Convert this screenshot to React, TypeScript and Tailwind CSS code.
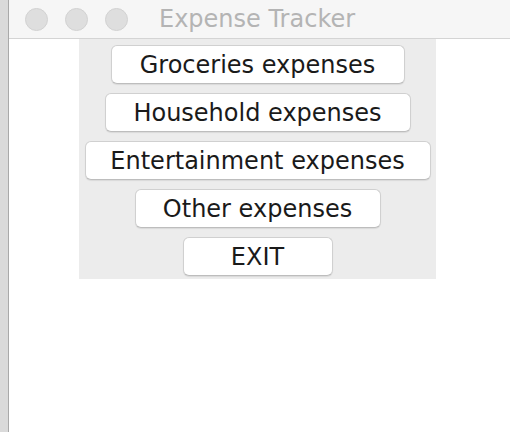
const buttons = [
  { label: 'Groceries expenses', w: 'w-[294px]' },
  { label: 'Household expenses', w: 'w-[306px]' },
  { label: 'Entertainment expenses', w: 'w-[346px]' },
  { label: 'Other expenses', w: 'w-[246px]' },
  { label: 'EXIT', w: 'w-[150px]' },
]

export default function App() {
  return (
    <div className="flex h-[432px] w-[510px] overflow-hidden bg-white font-['DejaVu_Sans',Arial,sans-serif]">
      {/* window behind */}
      <div className="w-[9px] shrink-0 border-r border-[#a9a9a9] bg-[#dadada]" />

      <div className="flex flex-1 flex-col">
        {/* title bar */}
        <div className="relative flex h-[39px] shrink-0 items-center border-b border-[#d4d4d4] bg-[#f6f6f6]">
          <div className="flex gap-[17px] pl-[16px]">
            <span className="h-[23px] w-[23px] rounded-full border border-[#d2d2d2] bg-[#dedede]" />
            <span className="h-[23px] w-[23px] rounded-full border border-[#d2d2d2] bg-[#dedede]" />
            <span className="h-[23px] w-[23px] rounded-full border border-[#d2d2d2] bg-[#dedede]" />
          </div>
          <span className="ml-[31px] text-[24px] leading-none text-[#b4b4b4]">Expense Tracker</span>
        </div>

        {/* content */}
        <div className="flex-1 bg-white">
          <div className="ml-[70px] flex h-[240px] w-[357px] flex-col items-center gap-[9px] bg-[#ececec] pt-[6px]">
            {buttons.map((b) => (
              <button
                key={b.label}
                className={`${b.w} h-[39px] shrink-0 rounded-[6px] border border-[#d0d0d0] border-b-[#bdbdbd] bg-white text-[24px] leading-none text-[#1a1a1a] shadow-[0_1px_1px_rgba(0,0,0,0.08)]`}
              >
                {b.label}
              </button>
            ))}
          </div>
        </div>
      </div>
    </div>
  )
}
